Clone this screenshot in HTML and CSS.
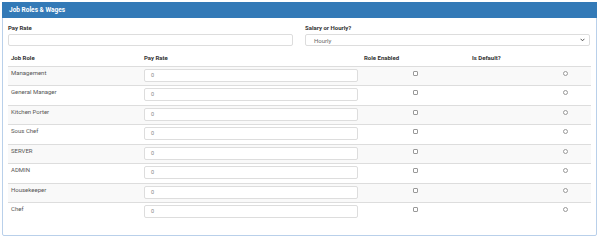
FILE: index.html
```html
<!DOCTYPE html>
<html>
<head>
<meta charset="utf-8">
<link rel="stylesheet" href="styles.css">
</head>
<body>
<div class="panel">
  <div class="panel-heading">Job Roles &amp; Wages</div>
  <div class="panel-body">
    <div class="form-row">
      <div class="form-group">
        <label class="label">Pay Rate</label>
        <div class="input"></div>
      </div>
      <div class="form-group">
        <label class="label">Salary or Hourly?</label>
        <div class="input select"><span>Hourly</span>
          <svg class="chev" width="5" height="4" viewBox="0 0 5 4"><path d="M0.6 0.8 L2.5 2.8 L4.4 0.8" fill="none" stroke="#555" stroke-width="1"/></svg>
        </div>
      </div>
    </div>
    <table class="roles">
      <thead>
        <tr><th class="c-role">Job Role</th><th class="c-pay">Pay Rate</th><th class="c-en">Role Enabled</th><th class="c-def">Is Default?</th><th class="c-radio"></th></tr>
      </thead>
      <tbody>
        <tr><td>Management</td><td><div class="rate">0</div></td><td class="center"><span class="cb"></span></td><td></td><td class="center"><span class="rd"></span></td></tr>
        <tr><td>General Manager</td><td><div class="rate">0</div></td><td class="center"><span class="cb"></span></td><td></td><td class="center"><span class="rd"></span></td></tr>
        <tr><td>Kitchen Porter</td><td><div class="rate">0</div></td><td class="center"><span class="cb"></span></td><td></td><td class="center"><span class="rd"></span></td></tr>
        <tr><td>Sous Chef</td><td><div class="rate">0</div></td><td class="center"><span class="cb"></span></td><td></td><td class="center"><span class="rd"></span></td></tr>
        <tr><td>SERVER</td><td><div class="rate">0</div></td><td class="center"><span class="cb"></span></td><td></td><td class="center"><span class="rd"></span></td></tr>
        <tr><td>ADMIN</td><td><div class="rate">0</div></td><td class="center"><span class="cb"></span></td><td></td><td class="center"><span class="rd"></span></td></tr>
        <tr><td>Housekeeper</td><td><div class="rate">0</div></td><td class="center"><span class="cb"></span></td><td></td><td class="center"><span class="rd"></span></td></tr>
        <tr><td>Chef</td><td><div class="rate">0</div></td><td class="center"><span class="cb"></span></td><td></td><td class="center"><span class="rd"></span></td></tr>
      </tbody>
    </table>
  </div>
</div>
</body>
</html>
```
FILE: styles.css
```css
* { box-sizing: border-box; }
html, body { margin: 0; padding: 0; background: #fff; }
body { font-family: Roboto, "Liberation Sans", sans-serif; font-size: 6px; color: #555; }
.panel {
  margin: 2px 0 0 2px;
  width: 595px;
  height: 234px;
  border: 1px solid #b9d0ea;
  border-radius: 2px;
}
.panel-heading {
  height: 16px;
  margin: -1px -1px 0;
  background: #337ab7;
  color: #fff;
  font-weight: bold;
  font-size: 6.5px;
  line-height: 17px;
  padding-left: 7px;
}
.panel-body { padding: 6px 6px 0 5px; }
.form-row { display: flex; gap: 12px; }
.form-group { flex: 1; }
.label { display: block; font-weight: bold; color: #333; height: 7px; line-height: 7px; margin-bottom: 3px; }
.input {
  height: 12px;
  border: 1px solid #ddd;
  border-radius: 2px;
  background: #fff;
}
.select { display: flex; align-items: center; justify-content: space-between; padding: 0 4px 0 8px; color: #666; }
.chev { display: block; }
.roles { width: 583px; border-collapse: collapse; margin-top: 4px; }
.roles th { text-align: left; font-weight: bold; color: #333; height: 16px; padding: 0 3px; vertical-align: middle; border-bottom: 1px solid #ddd; }
.roles td { height: 19.5px; padding: 2px 3px 0; vertical-align: top; border-top: 1px solid #ddd; color: #555; }
.roles tbody tr:nth-child(odd) td { background: #f9f9f9; }
.roles tbody tr:first-child td { border-top: 0; }
.c-role { width: 133px; }
.c-pay { width: 217px; }
.c-en { width: 108px; }
.c-def { width: 71px; }
.roles td.center { text-align: center; }
.rate {
  width: 214px; height: 13px; border: 1px solid #ddd; border-radius: 2px; background: #fff;
  padding-left: 6px; line-height: 11px; color: #888; font-size: 5.5px;
}
.cb { display: inline-block; width: 5px; height: 5px; border: 1px solid #999; border-radius: 1px; background: #fff; margin-top: 2px; }
.rd { display: inline-block; width: 5px; height: 5px; border: 1px solid #999; border-radius: 50%; background: #fff; margin-top: 2px; }
```
